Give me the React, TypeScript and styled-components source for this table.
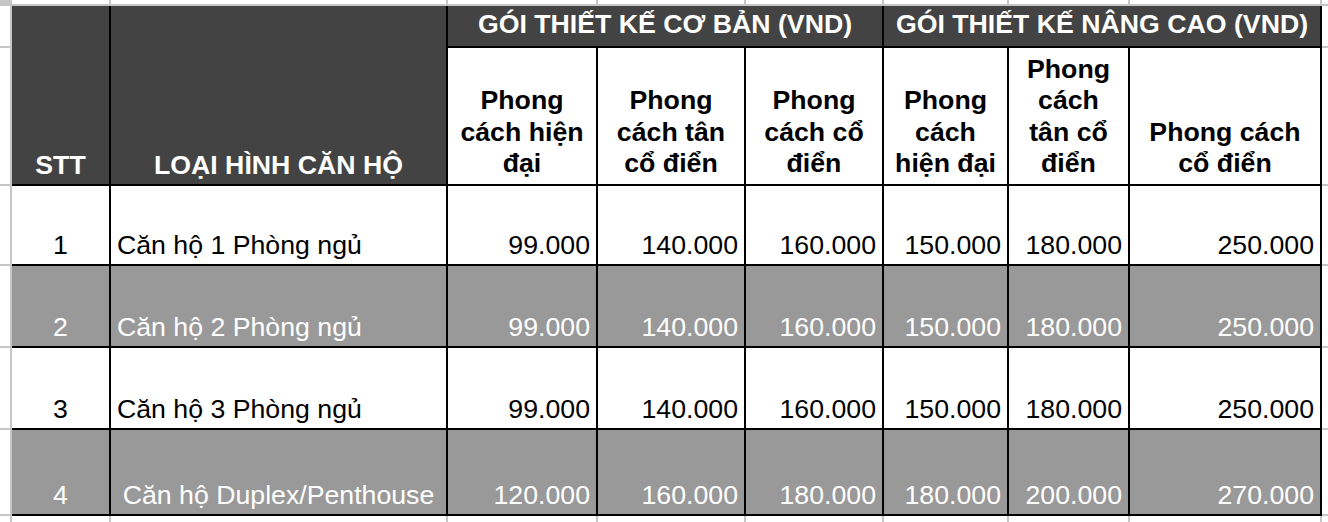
import { createGlobalStyle, styled } from 'styled-components'

// column / row tracks of the sheet, measured from the screenshot
const COLS = [12, 99, 337, 150, 148, 138, 125, 121, 192, 6]
const ROWS = [6, 42, 138, 80, 82, 82, 86, 6]

const GRIDLINE = '#c6c6c6'
const INK = '#000000'

type Tone = 'head' | 'sub' | 'plain' | 'shade'
type Align = 'left' | 'center' | 'right'

interface Apartment {
  stt: number
  name: string
  prices: string[]
  centerName?: boolean
}

const BASIC = ['99.000', '140.000', '160.000', '150.000', '180.000', '250.000']

const apartments: Apartment[] = [
  { stt: 1, name: 'Căn hộ 1 Phòng ngủ', prices: BASIC },
  { stt: 2, name: 'Căn hộ 2 Phòng ngủ', prices: BASIC },
  { stt: 3, name: 'Căn hộ 3 Phòng ngủ', prices: BASIC },
  {
    stt: 4,
    name: 'Căn hộ Duplex/Penthouse',
    prices: ['120.000', '160.000', '180.000', '180.000', '200.000', '270.000'],
    centerName: true,
  },
]

// sub headers, broken exactly like the sheet wraps them
const styles: string[][] = [
  ['Phong', 'cách hiện', 'đại'],
  ['Phong', 'cách tân', 'cổ điển'],
  ['Phong', 'cách cổ', 'điển'],
  ['Phong', 'cách', 'hiện đại'],
  ['Phong', 'cách', 'tân cổ', 'điển'],
  ['Phong cách', 'cổ điển'],
]

const GlobalStyle = createGlobalStyle`
  html, body {
    margin: 0;
    padding: 0;
    background: #ffffff;
  }
  body {
    font-family: "Liberation Sans", Arial, sans-serif;
    overflow: hidden;
  }
`

const Sheet = styled.div`
  display: grid;
  grid-template-columns: ${COLS.map((c) => `${c}px`).join(' ')};
  grid-template-rows: ${ROWS.map((r) => `${r}px`).join(' ')};
  width: 1328px;
  font-family: "Liberation Sans", Arial, sans-serif;
  font-size: 26.7px;
`

const GridCell = styled.div<{ $corner?: boolean; $noRight?: boolean; $noBottom?: boolean }>`
  box-sizing: border-box;
  background: ${(p) => (p.$corner ? GRIDLINE : '#ffffff')};
  border-right: ${(p) => (p.$noRight ? 'none' : `2px solid ${GRIDLINE}`)};
  border-bottom: ${(p) => (p.$noBottom ? 'none' : `2px solid ${GRIDLINE}`)};
`

const toneBg: Record<Tone, string> = {
  head: '#434343',
  sub: '#ffffff',
  plain: '#ffffff',
  shade: '#999999',
}

const toneInk: Record<Tone, string> = {
  head: '#ffffff',
  sub: '#000000',
  plain: '#000000',
  shade: '#ffffff',
}

const justify: Record<Align, string> = {
  left: 'flex-start',
  center: 'center',
  right: 'flex-end',
}

const Cell = styled.div<{ $tone: Tone; $align?: Align; $rows?: number; $cols?: number; $pad?: number }>`
  box-sizing: border-box;
  grid-row: span ${(p) => p.$rows ?? 1};
  grid-column: span ${(p) => p.$cols ?? 1};
  display: flex;
  align-items: flex-end;
  justify-content: ${(p) => justify[p.$align ?? 'center']};
  text-align: ${(p) => p.$align ?? 'center'};
  padding: 0 6px ${(p) => p.$pad ?? 4}px;
  background: ${(p) => toneBg[p.$tone]};
  color: ${(p) => toneInk[p.$tone]};
  font-weight: ${(p) => (p.$tone === 'head' || p.$tone === 'sub' ? 700 : 400)};
  line-height: 30px;
  white-space: nowrap;
  border-right: 2px solid ${INK};
  border-bottom: 2px solid ${INK};
`

const Lines = styled.div`
  display: flex;
  flex-direction: column;
  align-items: center;
  line-height: 31.6px;
`

export default function App() {
  const inner = COLS.length - 2

  return (
    <>
      <GlobalStyle />
      <Sheet>
        {/* top gridline strip */}
        <GridCell $corner />
        {Array.from({ length: inner }).map((_, i) => (
          <GridCell key={`top-${i}`} />
        ))}
        <GridCell $noRight />

        {/* group header */}
        <GridCell />
        <Cell $tone="head" $rows={2}>STT</Cell>
        <Cell $tone="head" $rows={2}>LOẠI HÌNH CĂN HỘ</Cell>
        <Cell $tone="head" $cols={3} $pad={7}>GÓI THIẾT KẾ CƠ BẢN (VND)</Cell>
        <Cell $tone="head" $cols={3} $pad={7}>GÓI THIẾT KẾ NÂNG CAO (VND)</Cell>
        <GridCell $noRight />

        {/* style sub headers */}
        <GridCell />
        {styles.map((lines, i) => (
          <Cell key={`style-${i}`} $tone="sub">
            <Lines>
              {lines.map((l) => (
                <span key={l}>{l}</span>
              ))}
            </Lines>
          </Cell>
        ))}
        <GridCell $noRight />

        {/* price rows */}
        {apartments.map((a, r) => {
          const tone: Tone = r % 2 === 1 ? 'shade' : 'plain'
          return [
            <GridCell key={`l-${a.stt}`} />,
            <Cell key={`stt-${a.stt}`} $tone={tone}>{a.stt}</Cell>,
            <Cell key={`name-${a.stt}`} $tone={tone} $align={a.centerName ? 'center' : 'left'}>
              {a.name}
            </Cell>,
            ...a.prices.map((p, i) => (
              <Cell key={`p-${a.stt}-${i}`} $tone={tone} $align="right">
                {p}
              </Cell>
            )),
            <GridCell key={`r-${a.stt}`} $noRight />,
          ]
        })}

        {/* bottom gridline strip */}
        {Array.from({ length: COLS.length }).map((_, i) => (
          <GridCell key={`bot-${i}`} $noBottom $noRight={i === COLS.length - 1} />
        ))}
      </Sheet>
    </>
  )
}
